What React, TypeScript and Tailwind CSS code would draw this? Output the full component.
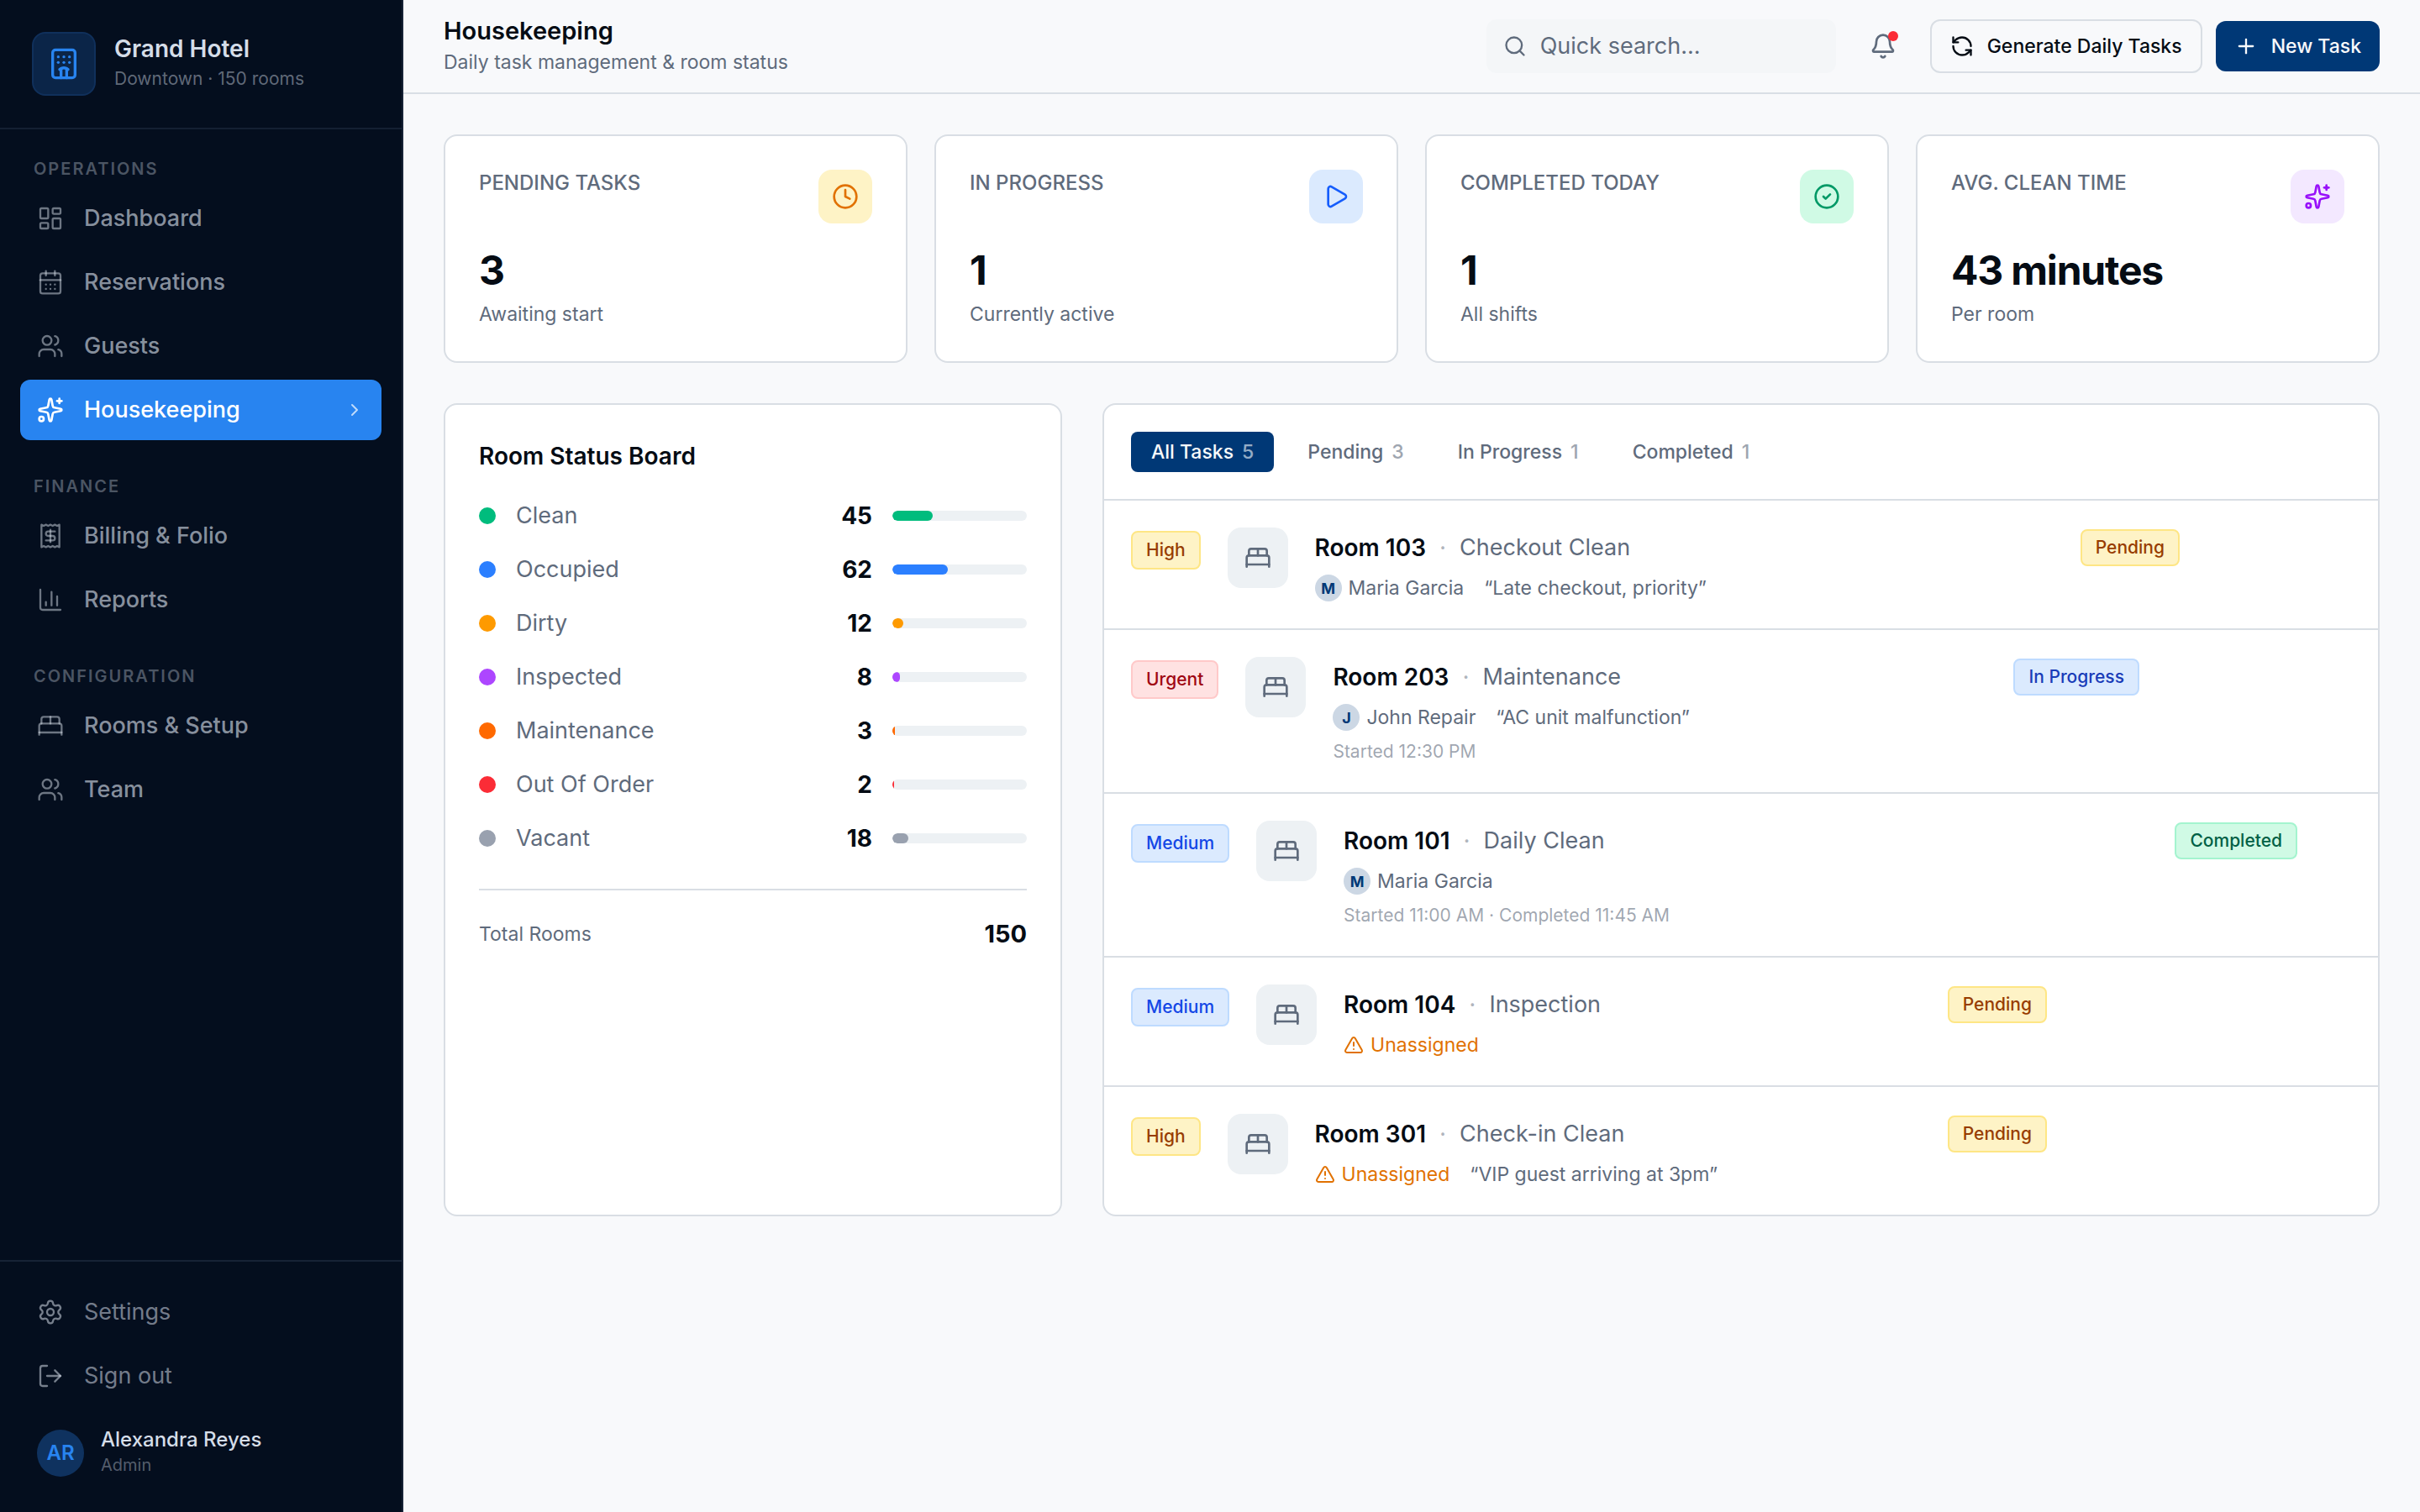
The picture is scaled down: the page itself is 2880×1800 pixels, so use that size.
import React from "react";
import {
  BedDouble,
  Bell,
  CalendarDays,
  ChartColumn,
  ChevronRight,
  CircleCheck,
  Clock,
  Hotel,
  LayoutDashboard,
  LogOut,
  type LucideIcon,
  Play,
  Plus,
  Receipt,
  RefreshCcw,
  Search,
  Settings,
  Sparkles,
  TriangleAlert,
  Users,
} from "lucide-react";

type NavEntry = { label: string; icon: LucideIcon; active?: boolean };

const navGroups: { title: string; items: NavEntry[] }[] = [
  {
    title: "Operations",
    items: [
      { label: "Dashboard", icon: LayoutDashboard },
      { label: "Reservations", icon: CalendarDays },
      { label: "Guests", icon: Users },
      { label: "Housekeeping", icon: Sparkles, active: true },
    ],
  },
  {
    title: "Finance",
    items: [
      { label: "Billing & Folio", icon: Receipt },
      { label: "Reports", icon: ChartColumn },
    ],
  },
  {
    title: "Configuration",
    items: [
      { label: "Rooms & Setup", icon: BedDouble },
      { label: "Team", icon: Users },
    ],
  },
];

const stats: { label: string; value: string; note: string; icon: LucideIcon; tone: string }[] = [
  { label: "Pending Tasks", value: "3", note: "Awaiting start", icon: Clock, tone: "bg-amber-100 text-amber-600" },
  { label: "In Progress", value: "1", note: "Currently active", icon: Play, tone: "bg-blue-100 text-blue-600" },
  { label: "Completed Today", value: "1", note: "All shifts", icon: CircleCheck, tone: "bg-emerald-100 text-emerald-600" },
  { label: "Avg. Clean Time", value: "43 minutes", note: "Per room", icon: Sparkles, tone: "bg-purple-100 text-purple-600" },
];

const totalRooms = 150;

const roomStatus = [
  { label: "Clean", count: 45, color: "bg-emerald-500" },
  { label: "Occupied", count: 62, color: "bg-blue-500" },
  { label: "Dirty", count: 12, color: "bg-amber-500" },
  { label: "Inspected", count: 8, color: "bg-purple-500" },
  { label: "Maintenance", count: 3, color: "bg-orange-500" },
  { label: "Out Of Order", count: 2, color: "bg-red-500" },
  { label: "Vacant", count: 18, color: "bg-gray-400" },
];

const tabs = [
  { label: "All Tasks", count: 5, active: true },
  { label: "Pending", count: 3 },
  { label: "In Progress", count: 1 },
  { label: "Completed", count: 1 },
];

const priorityTone = {
  High: "border-amber-200 bg-amber-100 text-amber-800",
  Urgent: "border-red-200 bg-red-100 text-red-800",
  Medium: "border-blue-200 bg-blue-100 text-blue-700",
};

const statusTone = {
  Pending: "border-amber-200 bg-amber-100 text-amber-800",
  "In Progress": "border-blue-200 bg-blue-100 text-blue-800",
  Completed: "border-emerald-200 bg-emerald-100 text-emerald-800",
};

type Task = {
  room: string;
  type: string;
  priority: keyof typeof priorityTone;
  status: keyof typeof statusTone;
  assignee?: string;
  note?: string;
  times?: string;
  actionsWidth: string;
};

const tasks: Task[] = [
  { room: "Room 103", type: "Checkout Clean", priority: "High", status: "Pending", assignee: "Maria Garcia", note: "Late checkout, priority", actionsWidth: "w-[180px]" },
  { room: "Room 203", type: "Maintenance", priority: "Urgent", status: "In Progress", assignee: "John Repair", note: "AC unit malfunction", times: "Started 12:30 PM", actionsWidth: "w-[228px]" },
  { room: "Room 101", type: "Daily Clean", priority: "Medium", status: "Completed", assignee: "Maria Garcia", times: "Started 11:00 AM · Completed 11:45 AM", actionsWidth: "w-[40px]" },
  { room: "Room 104", type: "Inspection", priority: "Medium", status: "Pending", actionsWidth: "w-[338px]" },
  { room: "Room 301", type: "Check-in Clean", priority: "High", status: "Pending", note: "VIP guest arriving at 3pm", actionsWidth: "w-[338px]" },
];

function NavItem({ label, icon: Icon, active }: NavEntry) {
  return (
    <a
      href="#"
      aria-current={active ? "page" : undefined}
      className={
        active
          ? "flex h-[72px] items-center gap-6 rounded-xl bg-[#2884f0] px-5 text-[27px] font-medium text-white"
          : "flex h-[72px] items-center gap-6 rounded-xl px-5 text-[27px] font-medium text-[#d5dde8]/65"
      }
    >
      <Icon className={active ? "size-8" : "size-8 text-[#d5dde8]/50"} strokeWidth={active ? 2 : 1.75} />
      <span className="flex-1">{label}</span>
      {active && <ChevronRight className="size-6 text-white/70" />}
    </a>
  );
}

function Sidebar() {
  return (
    <aside className="flex w-[480px] shrink-0 flex-col border-r-2 border-[#172336] bg-[#040e1e]">
      <div className="flex items-center gap-[22px] border-b-2 border-[#142033] p-[38px]">
        <div className="flex size-[76px] items-center justify-center rounded-2xl border-2 border-[#10305b] bg-[#0b2548]">
          <Hotel className="size-10 text-[#2884f0]" />
        </div>
        <div>
          <p className="text-[28px] leading-9 font-semibold text-[#d5dde8]">Grand Hotel</p>
          <p className="text-[21px] leading-9 text-[#d5dde8]/45">Downtown · 150 rooms</p>
        </div>
      </div>

      <nav className="flex flex-1 flex-col gap-10 px-6 py-8">
        {navGroups.map((group) => (
          <section key={group.title}>
            <h2 className="mb-2 px-4 text-[20px] leading-[30px] font-semibold tracking-widest text-[#d5dde8]/35 uppercase">
              {group.title}
            </h2>
            <div className="flex flex-col gap-1">
              {group.items.map((item) => (
                <NavItem key={item.label} {...item} />
              ))}
            </div>
          </section>
        ))}
      </nav>

      <div className="flex flex-col gap-1 border-t-2 border-[#172336] px-6 pt-6 pb-10">
        {[
          { label: "Settings", icon: Settings },
          { label: "Sign out", icon: LogOut },
        ].map(({ label, icon: Icon }) => (
          <button key={label} type="button" className="flex h-[72px] items-center gap-6 px-5 text-left text-[27px] text-[#d5dde8]/55">
            <Icon className="size-8" strokeWidth={1.75} />
            {label}
          </button>
        ))}
        <div className="flex items-center gap-5 px-5 pt-[22px]">
          <div className="flex size-14 items-center justify-center rounded-full bg-[#0f325f] text-[24px] font-semibold text-[#2884f0]">
            AR
          </div>
          <div>
            <p className="text-[24px] leading-7 font-medium text-[#d5dde8]">Alexandra Reyes</p>
            <p className="text-[20px] leading-8 text-[#d5dde8]/40">Admin</p>
          </div>
        </div>
      </div>
    </aside>
  );
}

function TopBar() {
  return (
    <header className="flex h-28 items-center border-b-2 border-[#d9dfe5] px-12">
      <div className="flex-1">
        <h1 className="text-[29px] leading-[38px] font-semibold">Housekeeping</h1>
        <p className="text-[23px] leading-9 text-[#5f6b7c]">Daily task management &amp; room status</p>
      </div>
      <label className="flex h-16 w-[416px] items-center gap-4 rounded-xl bg-[#f4f6f8] px-5 text-[#5f6b7c]">
        <Search className="size-7" />
        <input
          type="search"
          aria-label="Quick search"
          placeholder="Quick search…"
          className="min-w-0 flex-1 bg-transparent text-[27px] outline-none placeholder:text-[#5f6b7c]"
        />
      </label>
      <button type="button" aria-label="Notifications" className="relative mx-6 flex size-16 items-center justify-center text-[#5f6b7c]">
        <Bell className="size-8" />
        <span className="absolute top-[14px] right-[14px] size-3 rounded-full bg-red-500" />
      </button>
      <button type="button" className="flex h-16 items-center gap-4 rounded-xl border-2 border-[#d9dee4] px-[22px] text-[23px] font-medium">
        <RefreshCcw className="size-7" />
        Generate Daily Tasks
      </button>
      <button type="button" className="ml-4 flex h-15 items-center gap-4 rounded-xl bg-[#003876] px-[22px] text-[23px] font-medium text-[#f8f9fb]">
        <Plus className="size-7" />
        New Task
      </button>
    </header>
  );
}

function StatCards() {
  return (
    <section className="grid grid-cols-4 gap-8">
      {stats.map(({ label, value, note, icon: Icon, tone }) => (
        <article key={label} className="rounded-2xl border-2 border-[#d9dee4] bg-white p-10 pb-9">
          <div className="flex items-start justify-between">
            <h2 className="text-[24px] leading-8 font-medium text-[#5f6b7c] uppercase">{label}</h2>
            <div className={`flex size-16 items-center justify-center rounded-2xl ${tone}`}>
              <Icon className="size-8" />
            </div>
          </div>
          <p className="mt-7 text-[48px] leading-[56px] font-bold tracking-tight">{value}</p>
          <p className="mt-1 text-[23px] leading-10 text-[#5f6b7c]">{note}</p>
        </article>
      ))}
    </section>
  );
}

function RoomStatusBoard() {
  return (
    <section className="rounded-2xl border-2 border-[#d9dee4] bg-white p-10">
      <h2 className="mb-[26px] text-[28px] leading-[42px] font-semibold">Room Status Board</h2>
      <ul className="flex flex-col gap-4">
        {roomStatus.map(({ label, count, color }) => (
          <li key={label} className="flex h-12 items-center gap-6">
            <span className={`size-5 rounded-full ${color}`} />
            <span className="flex-1 text-[27px] text-[#5f6b7c]">{label}</span>
            <span className="text-[28px] font-bold">{count}</span>
            <span className="h-3 w-40 overflow-hidden rounded-full bg-[#edf1f4]">
              <span className={`block h-full rounded-full ${color}`} style={{ width: `${(count / totalRooms) * 100}%` }} />
            </span>
          </li>
        ))}
      </ul>
      <div className="mt-9 flex items-center justify-between border-t-2 border-[#d9dee4] pt-7">
        <span className="text-[23px] leading-[48px] text-[#5f6b7c]">Total Rooms</span>
        <span className="text-[29px] leading-[48px] font-bold">{totalRooms}</span>
      </div>
    </section>
  );
}

function TaskRow({ task }: { task: Task }) {
  return (
    <li className="flex items-start p-8">
      <span className={`mt-1 mr-8 flex h-[46px] items-center rounded-lg border-2 px-4 text-[21px] font-medium ${priorityTone[task.priority]}`}>
        {task.priority}
      </span>
      <div className="mr-8 flex size-[72px] items-center justify-center rounded-2xl bg-[#edf1f4] text-[#5f6b7c]">
        <BedDouble className="size-8" />
      </div>
      <div className="min-w-0 flex-1">
        <h3 className="flex gap-4 text-[28px] leading-[48px] font-semibold">
          {task.room}
          <span className="font-normal text-[#5f6b7c]/50">·</span>
          <span className="text-[27px] font-normal text-[#5f6b7c]">{task.type}</span>
        </h3>
        <div className="mt-2 flex h-8 items-center gap-6 text-[23px] text-[#5f6b7c]">
          {task.assignee ? (
            <span className="flex items-center gap-2">
              <span className="flex size-8 items-center justify-center rounded-full bg-[#ccd7e4] text-[18px] font-bold text-[#003876]">
                {task.assignee[0]}
              </span>
              {task.assignee}
            </span>
          ) : (
            <span className="flex items-center gap-2 text-amber-600">
              <TriangleAlert className="size-6" />
              Unassigned
            </span>
          )}
          {task.note && <span>“{task.note}”</span>}
        </div>
        {task.times && <p className="mt-2 text-[21px] leading-[33px] text-[#5f6b7c]/60">{task.times}</p>}
      </div>
      <span className={`mt-0.5 mr-6 flex h-11 items-center rounded-lg border-2 px-4 text-[21px] font-medium ${statusTone[task.status]}`}>
        {task.status}
      </span>
      <div className={`shrink-0 ${task.actionsWidth}`} />
    </li>
  );
}

function TaskPanel() {
  return (
    <section className="col-span-2 overflow-hidden rounded-2xl border-2 border-[#d9dee4] bg-white">
      <div className="flex gap-4 border-b-2 border-[#d9dee4] p-8">
        {tabs.map(({ label, count, active }) => (
          <button
            key={label}
            type="button"
            className={
              active
                ? "flex h-12 items-center gap-2.5 rounded-lg bg-[#003876] px-6 text-[23px] font-medium text-[#f8f9fb]"
                : "flex h-12 items-center gap-2.5 rounded-lg px-6 text-[23px] font-medium text-[#5f6b7c]"
            }
          >
            {label}
            <span className="opacity-60">{count}</span>
          </button>
        ))}
      </div>
      <ul className="divide-y-2 divide-[#d9dee4]">
        {tasks.map((task) => (
          <TaskRow key={task.room} task={task} />
        ))}
      </ul>
    </section>
  );
}

export default function App() {
  return (
    <div className="flex min-h-screen bg-[#f8f9fb] font-['Inter',sans-serif] text-[#050c14]">
      <Sidebar />
      <div className="min-w-0 flex-1">
        <TopBar />
        <main className="flex flex-col gap-12 p-12">
          <StatCards />
          <div className="grid grid-cols-3 gap-12">
            <RoomStatusBoard />
            <TaskPanel />
          </div>
        </main>
      </div>
    </div>
  );
}
